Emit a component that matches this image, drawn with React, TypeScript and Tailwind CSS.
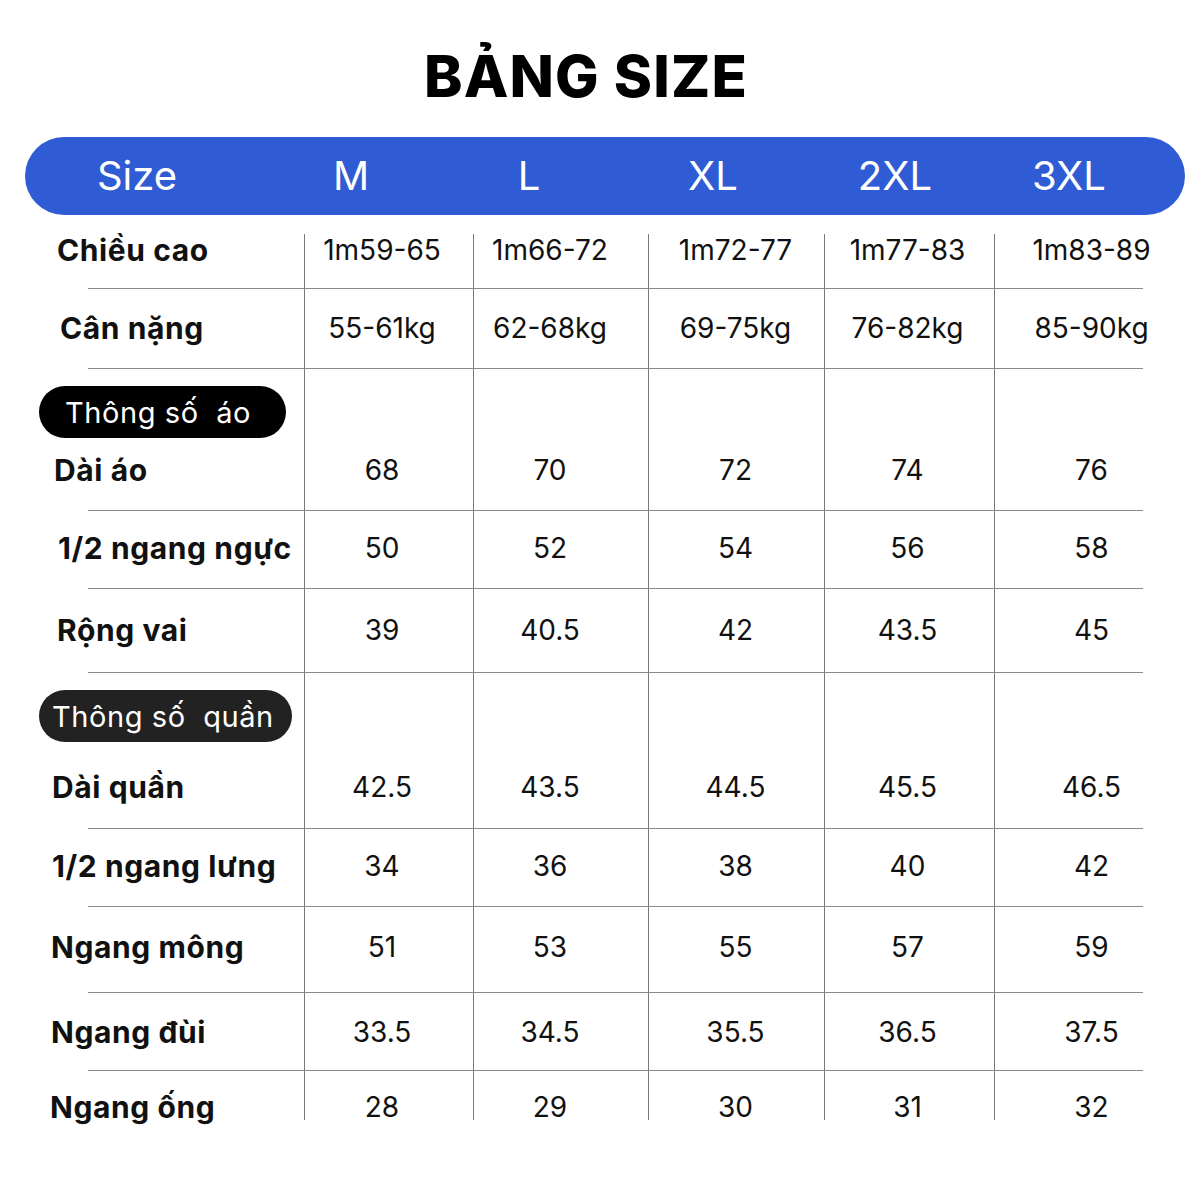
const FONT = { fontFamily: "Inter, 'Noto Sans', 'Liberation Sans', sans-serif" };

type Row = {
  label: string;
  values: string[];
  h: string;
  pt: string;
  pl: string;
  pill?: { text: string; cls: string; gap: string };
};

const cols = [
  "w-[169px] pr-[14px]",
  "w-[175px] pr-[22px]",
  "w-[176px] pr-[2px]",
  "w-[170px] pr-[4px]",
  "w-[194px]",
];

const headers = [
  { t: "Size", w: "w-[224px]" },
  { t: "M", w: "w-[204px]" },
  { t: "L", w: "w-[152px]" },
  { t: "XL", w: "w-[216px]" },
  { t: "2XL", w: "w-[148px]" },
  { t: "3XL", w: "w-[200px]" },
];

const rows: Row[] = [
  { label: "Chiều cao", values: ["1m59-65", "1m66-72", "1m72-77", "1m77-83", "1m83-89"], h: "h-[54px]", pt: "pt-[0px]", pl: "pl-[57px]" },
  { label: "Cân nặng", values: ["55-61kg", "62-68kg", "69-75kg", "76-82kg", "85-90kg"], h: "h-[79px]", pt: "pt-[23px]", pl: "pl-[60px]" },
  {
    label: "Dài áo", values: ["68", "70", "72", "74", "76"], h: "h-[141px]", pt: "pt-[85px]", pl: "pl-[54px]",
    pill: { text: "Thông số  áo", cls: "w-[247px] pl-[26px] bg-black", gap: "mt-[16px]" },
  },
  { label: "1/2 ngang ngực", values: ["50", "52", "54", "56", "58"], h: "h-[77px]", pt: "pt-[21px]", pl: "pl-[58px]" },
  { label: "Rộng vai", values: ["39", "40.5", "42", "43.5", "45"], h: "h-[83px]", pt: "pt-[25px]", pl: "pl-[57px]" },
  {
    label: "Dài quần", values: ["42.5", "43.5", "44.5", "45.5", "46.5"], h: "h-[155px]", pt: "pt-[98px]", pl: "pl-[52px]",
    pill: { text: "Thông số  quần", cls: "w-[253px] pl-[13px] bg-[#222222]", gap: "mt-[29px]" },
  },
  { label: "1/2 ngang lưng", values: ["34", "36", "38", "40", "42"], h: "h-[77px]", pt: "pt-[21px]", pl: "pl-[52px]" },
  { label: "Ngang mông", values: ["51", "53", "55", "57", "59"], h: "h-[85px]", pt: "pt-[24px]", pl: "pl-[51px]" },
  { label: "Ngang đùi", values: ["33.5", "34.5", "35.5", "36.5", "37.5"], h: "h-[77px]", pt: "pt-[23px]", pl: "pl-[51px]" },
  { label: "Ngang ống", values: ["28", "29", "30", "31", "32"], h: "h-[49px]", pt: "pt-[20px]", pl: "pl-[50px]" },
];

const SizeRow = ({ row, last }: { row: Row; last: boolean }) => (
  <>
    <div className={`flex ${row.h}`}>
      <div className={`w-[304px] shrink-0 flex flex-col ${row.pill ? "pt-[17px]" : row.pt}`}>
        {row.pill && (
          <div
            className={`ml-[39px] h-[52px] rounded-full flex items-center text-white text-[29px] tracking-[0.02em] leading-none whitespace-pre ${row.pill.cls}`}
          >
            {row.pill.text}
          </div>
        )}
        <div
          className={`${row.pl} ${row.pill ? row.pill.gap : ""} text-[30px] tracking-[0.02em] leading-[32px] font-bold text-[#111] whitespace-nowrap`}
        >
          {row.label}
        </div>
      </div>
      {row.values.map((v, i) => (
        <div
          key={i}
          className={`shrink-0 border-l border-[#7a7a7a] flex justify-center ${cols[i]} ${row.pt}`}
        >
          <span className="text-[28px] leading-[32px] text-[#111] whitespace-nowrap">{v}</span>
        </div>
      ))}
    </div>
    {!last && <div className="ml-[88px] w-[1055px] h-px bg-[#8c8c8c]" />}
  </>
);

export default function App() {
  return (
    <div className="w-[1200px] h-[1200px] bg-white overflow-hidden" style={FONT}>
      <h1 className="pt-[47px] pr-[28px] text-center text-[58px] leading-none font-extrabold text-black tracking-[0.02em]">
        BẢNG SIZE
      </h1>

      <div className="mt-[32px] ml-[25px] w-[1160px] h-[78px] rounded-full bg-[#2f5bd4] flex items-center">
        {headers.map((h) => (
          <div key={h.t} className={`${h.w} text-center text-white text-[40px] leading-none`}>
            {h.t}
          </div>
        ))}
      </div>

      <div className="mt-[19px]">
        {rows.map((r, i) => (
          <SizeRow key={r.label} row={r} last={i === rows.length - 1} />
        ))}
      </div>
    </div>
  );
}
